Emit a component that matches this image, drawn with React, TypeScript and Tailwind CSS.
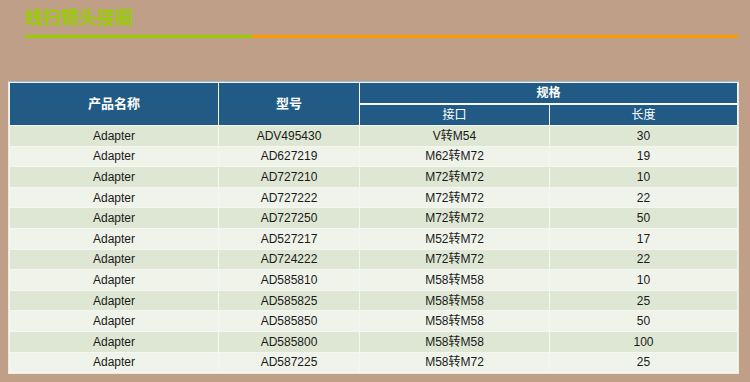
const rows: [string, string, string, string][] = [
  ["Adapter", "ADV495430", "V转M54", "30"],
  ["Adapter", "AD627219", "M62转M72", "19"],
  ["Adapter", "AD727210", "M72转M72", "10"],
  ["Adapter", "AD727222", "M72转M72", "22"],
  ["Adapter", "AD727250", "M72转M72", "50"],
  ["Adapter", "AD527217", "M52转M72", "17"],
  ["Adapter", "AD724222", "M72转M72", "22"],
  ["Adapter", "AD585810", "M58转M58", "10"],
  ["Adapter", "AD585825", "M58转M58", "25"],
  ["Adapter", "AD585850", "M58转M58", "50"],
  ["Adapter", "AD585800", "M58转M58", "100"],
  ["Adapter", "AD587225", "M58转M72", "25"],
];

export default function App() {
  return (
    <div
      className="w-[750px] h-[382px] bg-[#bf9f88] overflow-hidden"
      style={{ fontFamily: '"Liberation Sans", Arial, "Noto Sans CJK SC", sans-serif' }}
    >
      {/* Title */}
      <div className="pl-[25px] pt-[6px] h-[35px]">
        <h1 className="text-[18px] leading-[24px] font-bold text-[#99cc00]">线扫镜头接圈</h1>
      </div>
      <div className="ml-[25px] flex h-[3px] w-[713px]">
        <div className="w-[227px] bg-[#99cc00]" />
        <div className="flex-1 bg-[#ff9900]" />
      </div>

      {/* Table */}
      <table className="ml-[8px] mt-[43px] w-[731px] border-separate border-spacing-[1px] bg-[#f4f6f0] border border-[#e8ebe4] border-t-[#9db9d0] text-[12px] text-[#1a1a1a] text-center">
        <thead>
          <tr className="h-[21px]">
            <th rowSpan={2} className="w-[208px] p-0 bg-[#215b85] text-white text-[13px] font-bold">
              产品名称
            </th>
            <th rowSpan={2} className="w-[140px] p-0 bg-[#215b85] text-white text-[13px] font-bold">
              型号
            </th>
            <th colSpan={2} className="p-0 bg-[#215b85] text-white text-[12px] font-bold border-b border-white">
              规格
            </th>
          </tr>
          <tr className="h-[20px]">
            <th className="w-[189px] p-0 bg-[#215b85] text-white text-[12px] font-normal">接口</th>
            <th className="p-0 bg-[#215b85] text-white text-[12px] font-normal">长度</th>
          </tr>
        </thead>
        <tbody>
          {rows.map((r, i) => (
            <tr key={i} className={`h-[19.6px] ${i % 2 === 0 ? "bg-[#dee7d3]" : "bg-[#eff3ea]"}`}>
              {r.map((c, j) => (
                <td key={j} className="p-0 leading-[14px]">
                  {c}
                </td>
              ))}
            </tr>
          ))}
        </tbody>
      </table>
    </div>
  );
}
